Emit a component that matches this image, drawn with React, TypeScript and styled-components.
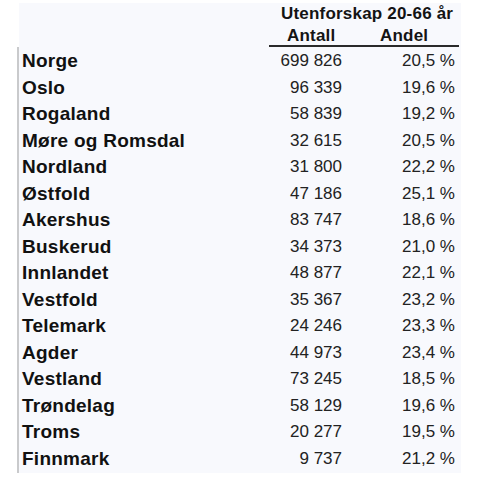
import * as React from 'react'
import styled, { createGlobalStyle, css } from 'styled-components'

const GlobalStyle = createGlobalStyle`
  html, body {
    margin: 0;
    padding: 0;
    background: #ffffff;
  }
  body {
    font-family: "Liberation Sans", Arial, sans-serif;
  }
`

const rows: [string, string, string][] = [
    ['Norge', '699 826', '20,5 %'],
    ['Oslo', '96 339', '19,6 %'],
    ['Rogaland', '58 839', '19,2 %'],
    ['Møre og Romsdal', '32 615', '20,5 %'],
    ['Nordland', '31 800', '22,2 %'],
    ['Østfold', '47 186', '25,1 %'],
    ['Akershus', '83 747', '18,6 %'],
    ['Buskerud', '34 373', '21,0 %'],
    ['Innlandet', '48 877', '22,1 %'],
    ['Vestfold', '35 367', '23,2 %'],
    ['Telemark', '24 246', '23,3 %'],
    ['Agder', '44 973', '23,4 %'],
    ['Vestland', '73 245', '18,5 %'],
    ['Trøndelag', '58 129', '19,6 %'],
    ['Troms', '20 277', '19,5 %'],
    ['Finnmark', '9 737', '21,2 %'],
]

const TINT = '#f8f9fd'

const Page = styled.div`
    padding: 3px 0 0 17px;
    width: 444px;
`

const Header = styled.div`
    margin-left: 2px;
    width: 442px;
    background: ${TINT};
    display: grid;
    grid-template-columns: 250px 73px 117px;
    grid-template-rows: 22px 22px;
    color: #141414;
    font-weight: bold;
    font-size: 17px;
    line-height: 21px;
    letter-spacing: 0.2px;
`

const Title = styled.div`
    grid-column: 2 / 4;
    grid-row: 1;
    padding-left: 12px;
    white-space: nowrap;
`

const SubHead = styled.div`
    grid-row: 2;
    border-bottom: 2px solid #2a2a2a;
    ${({ indent }: { indent: number }) => css`
        padding-left: ${indent}px;
    `}
`

const Body = styled.div`
    border-left: 2px solid #c9cacc;
    background: ${TINT};
    width: 442px;
    padding: 1px 0 1px;
`

const Row = styled.div`
    display: grid;
    grid-template-columns: 250px 73px 113px;
    height: 26.5px;
    align-items: center;
`

const Name = styled.div`
    padding-left: 3px;
    font-weight: bold;
    font-size: 19px;
    letter-spacing: 0.25px;
    color: #111111;
    white-space: nowrap;
`

const Num = styled.div`
    text-align: right;
    font-size: 17px;
    color: #222222;
    white-space: nowrap;
`

export default function App() {
    return <>
        <GlobalStyle />
        <Page>
            <Header>
                <Title>Utenforskap 20-66 år</Title>
                <SubHead indent={18} style={{ gridColumn: 2 }}>Antall</SubHead>
                <SubHead indent={38} style={{ gridColumn: 3 }}>Andel</SubHead>
            </Header>
            <Body>
                {rows.map(([name, antall, andel]) =>
                    <Row key={name}>
                        <Name>{name}</Name>
                        <Num>{antall}</Num>
                        <Num>{andel}</Num>
                    </Row>
                )}
            </Body>
        </Page>
    </>
}
